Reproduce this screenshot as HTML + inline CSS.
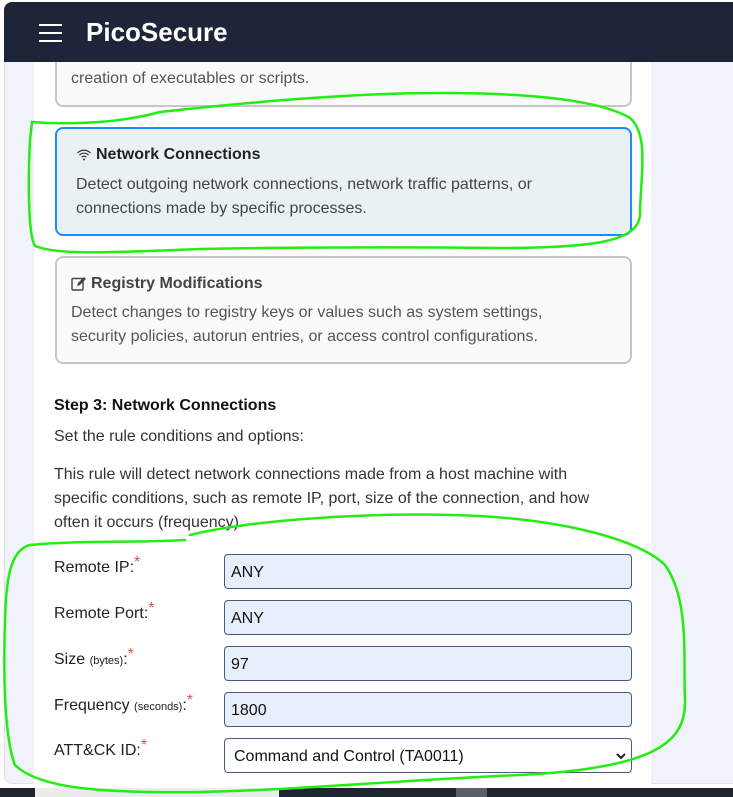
<!DOCTYPE html>
<html><head><meta charset="utf-8"><style>
*{box-sizing:border-box;margin:0;padding:0}
body{width:733px;height:797px;overflow:hidden;background:#fff;font-family:"Liberation Sans",sans-serif;color:#333;position:relative}
.a{position:absolute}
.outer{left:4px;top:2px;width:740px;height:782px;background:#f0f3f9;border-radius:8px;border:1px solid #dde2ea}
.hdr{left:4px;top:2px;width:740px;height:60px;background:#1e2538}
.panel{left:34px;top:62px;width:617px;height:726px;background:#fff}
.card{left:55px;width:577px;border:2px solid #c6c6c6;border-radius:8px;background:#fafafa}
.t{font-size:16px;line-height:24px;white-space:nowrap}
.inp{left:224px;width:408px;height:35px;background:#e8effc;border:1px solid #4a5a7a;border-radius:4px;font-size:16px;line-height:35px;padding-left:6px;color:#111}
.lbl{left:54px;font-size:16px;color:#222}
.lbl small{font-size:11px}
.lbl i{color:#d9534f;font-style:normal;position:relative;top:-5px}
</style></head><body>
<div class="a outer"></div>
<div class="a panel"></div>
<div class="a card" style="top:40px;height:67px"></div>
<div class="a t" style="left:71px;top:67px;color:#555">creation of executables or scripts.</div>
<div class="a hdr" style="border-radius:8px 0 0 0"></div>
<div class="a" style="left:39px;top:24px;width:23px;height:2px;background:#fff;box-shadow:0 8px 0 #fff,0 16px 0 #fff"></div>
<div class="a" style="left:86px;top:17px;font-size:26px;font-weight:bold;color:#fff">PicoSecure</div>

<div class="a card" style="top:127px;height:109px;border-color:#1a8cff;background:#eaf1f4"></div>
<svg class="a" style="left:76px;top:148px" width="16" height="14" viewBox="0 0 16 14"><path d="M1.5 5a9 9 0 0 1 13 0M3.5 7.2a6 6 0 0 1 9 0M5.6 9.3a3 3 0 0 1 4.8 0" stroke="#333" stroke-width="1.2" fill="none"/><circle cx="8" cy="11.5" r="1" fill="#333"/></svg>
<div class="a t" style="left:96px;top:143px;font-weight:bold;color:#222">Network Connections</div>
<div class="a t" style="left:76px;top:173px;color:#444">Detect outgoing network connections, network traffic patterns, or</div>
<div class="a t" style="left:76px;top:197px;color:#444">connections made by specific processes.</div>

<div class="a card" style="top:256px;height:108px"></div>
<svg class="a" style="left:71px;top:276px" width="16" height="16" viewBox="0 0 16 16"><rect x="1" y="2.5" width="11" height="11.5" rx="1" stroke="#444" stroke-width="1.4" fill="none"/><path d="M6 10l1-3 6-6 2 2-6 6z" fill="#444"/></svg>
<div class="a t" style="left:91px;top:272px;font-weight:bold;color:#444">Registry Modifications</div>
<div class="a t" style="left:71px;top:301px;color:#555">Detect changes to registry keys or values such as system settings,</div>
<div class="a t" style="left:71px;top:325px;color:#555">security policies, autorun entries, or access control configurations.</div>

<div class="a t" style="left:54px;top:394px;font-weight:bold;color:#111">Step 3: Network Connections</div>
<div class="a t" style="left:54px;top:425px;color:#333">Set the rule conditions and options:</div>
<div class="a t" style="left:54px;top:463px;color:#333">This rule will detect network connections made from a host machine with</div>
<div class="a t" style="left:54px;top:487px;color:#333">specific conditions, such as remote IP, port, size of the connection, and how</div>
<div class="a t" style="left:54px;top:511px;color:#333">often it occurs (frequency).</div>

<div class="a lbl" style="top:559px">Remote IP:<i>*</i></div>
<div class="a lbl" style="top:605px">Remote Port:<i>*</i></div>
<div class="a lbl" style="top:651px">Size <small>(bytes)</small>:<i>*</i></div>
<div class="a lbl" style="top:697px">Frequency <small>(seconds)</small>:<i>*</i></div>
<div class="a lbl" style="top:742px">ATT&amp;CK ID:<i>*</i></div>
<div class="a inp" style="top:554px">ANY</div>
<div class="a inp" style="top:600px">ANY</div>
<div class="a inp" style="top:646px">97</div>
<div class="a inp" style="top:692px">1800</div>
<div class="a inp" style="top:738px;background:#fff;padding-left:9px">Command and Control (TA0011)</div>
<svg class="a" style="left:616px;top:752px" width="10" height="8" viewBox="0 0 10 8"><path d="M1 2l4 4 4-4" stroke="#222" stroke-width="2" fill="none"/></svg>

<div class="a" style="left:0;top:788px;width:733px;height:9px;background:#1e2430"></div>
<div class="a" style="left:35px;top:788px;width:244px;height:9px;background:#ececec"></div>
<div class="a" style="left:456px;top:788px;width:31px;height:9px;background:#5a6068"></div>

<svg class="a" style="left:0;top:0" width="733" height="797" viewBox="0 0 733 797">
<g stroke="#22ee11" stroke-width="2.5" fill="none" stroke-linecap="round">
<path d="M32 122C70 125 120 123 160 112C250 102 350 93 440 93C530 93 600 100 630 118C650 135 640 180 640 215C638 240 600 248 500 248C400 247 300 247 200 249C120 252 60 256 35 246C28 235 28 180 30 140Z"/>
<path d="M190 535C260 518 380 513 450 515C560 517 640 540 665 565C690 600 683 660 685 700C686 740 660 768 520 775C400 780 300 790 200 792C110 793 40 790 15 765C5 740 3 680 5 620C6 580 10 550 30 545C80 540 140 543 185 540"/>
</g></svg>
</body></html>
